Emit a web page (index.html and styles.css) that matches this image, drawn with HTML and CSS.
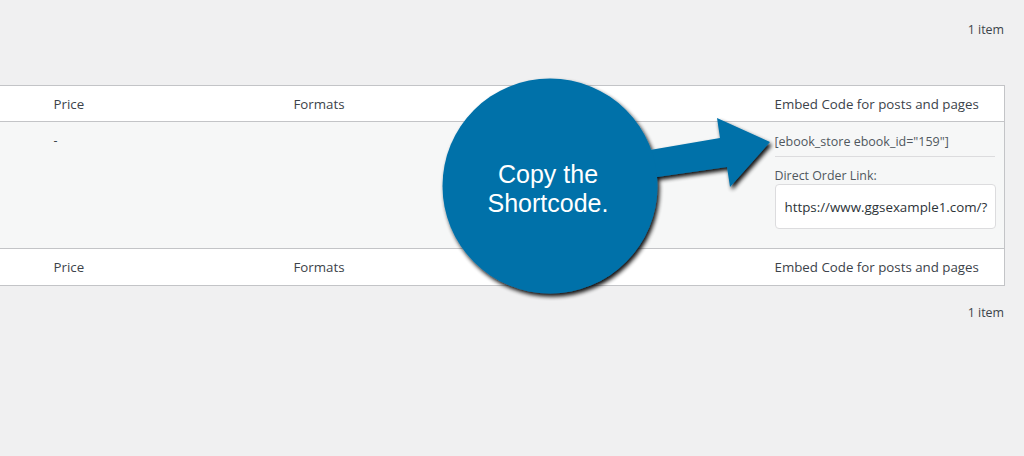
FILE: index.html
```html
<!DOCTYPE html>
<html lang="en">
<head>
<meta charset="utf-8">
<title>eBooks</title>
<link rel="stylesheet" href="styles.css">
</head>
<body>
<div class="wrap">
  <div class="tablenav top"><span class="count">1 item</span></div>
  <table class="list">
    <thead>
      <tr>
        <th class="col-cb"></th>
        <th class="col-price">Price</th>
        <th class="col-formats">Formats</th>
        <th class="col-embed">Embed Code for posts and pages</th>
      </tr>
    </thead>
    <tbody>
      <tr>
        <td class="col-cb"></td>
        <td class="col-price">-</td>
        <td class="col-formats"></td>
        <td class="col-embed">
          <div class="shortcode">[ebook_store ebook_id="159"]</div>
          <div class="order-label">Direct Order Link:</div>
          <div class="order-input">https://www.ggsexample1.com/?</div>
        </td>
      </tr>
    </tbody>
    <tfoot>
      <tr>
        <th class="col-cb"></th>
        <th class="col-price">Price</th>
        <th class="col-formats">Formats</th>
        <th class="col-embed">Embed Code for posts and pages</th>
      </tr>
    </tfoot>
  </table>
  <div class="tablenav bottom"><span class="count">1 item</span></div>
</div>

<div class="callout">
  <svg class="callout-art" width="360" height="240" viewBox="0 0 360 240" aria-hidden="true">
    <defs>
      <filter id="sh" x="-20%" y="-20%" width="140%" height="140%">
        <feGaussianBlur in="SourceAlpha" stdDeviation="2.2"/>
        <feOffset dx="2" dy="3" result="b"/>
        <feComponentTransfer><feFuncA type="linear" slope="0.95"/></feComponentTransfer>
        <feMerge><feMergeNode/><feMergeNode in="SourceGraphic"/></feMerge>
      </filter>
    </defs>
    <g filter="url(#sh)" fill="#0171a9">
      <polygon points="210,80 280,68 277,48 330,72 290,117 287,97 217,107"/>
      <circle cx="110" cy="116" r="107.5"/>
    </g>
  </svg>
  <div class="callout-text">Copy the<br>Shortcode.</div>
</div>
</body>
</html>
```
FILE: styles.css
```css
html, body {
  margin: 0;
  padding: 0;
}
body {
  background: #f0f0f1;
  color: #3c434a;
  font-family: "Open Sans", "Noto Sans", sans-serif;
  font-size: 13.3px;
  width: 1024px;
  height: 456px;
  overflow: hidden;
  position: relative;
}
.wrap {
  padding-right: 20px;
}
.tablenav {
  display: flex;
  justify-content: flex-end;
  align-items: center;
}
.tablenav.top {
  height: 58px;
  padding-bottom: 27px;
}
.tablenav.bottom {
  height: 52px;
}
.count {
  font-size: 12.4px;
  color: #3c434a;
}
.list {
  border-collapse: collapse;
  table-layout: fixed;
  width: 1005px;
  margin-left: -1px;
  background: #fff;
  border: 1px solid #c3c4c7;
}
.list th {
  font-weight: normal;
  text-align: left;
  height: 36px;
  padding: 0 10px;
  box-sizing: border-box;
}
.list tfoot th {
  height: 37px;
  border-top: 1px solid #c3c4c7;
}
.list thead th {
  border-bottom: 1px solid #c3c4c7;
}
.list tbody td {
  background: #f6f7f7;
  vertical-align: top;
  padding: 10px 10px 19px;
  font-size: 12.4px;
}
.col-cb { width: 44px; padding: 0 !important; }
.col-price { width: 240px; }
.col-formats { width: 481px; }
.col-embed { width: 240px; }
.list tbody .col-embed {
  padding: 12px 8px 19px 10px;
}
.shortcode {
  color: #50575e;
  font-size: 12.5px;
  line-height: 16px;
  padding-bottom: 6px;
  border-bottom: 1px solid #dcdcde;
  margin-right: 1px;
}
.order-label {
  color: #50575e;
  margin-top: 10px;
  line-height: 17px;
}
.order-input {
  margin-top: 0;
  height: 45px;
  box-sizing: border-box;
  border: 1px solid #dcdcde;
  border-radius: 4px;
  background: #fff;
  color: #2c3338;
  font-size: 13.35px;
  padding: 0 9px;
  display: flex;
  align-items: center;
  white-space: nowrap;
  overflow: hidden;
}
.callout {
  position: absolute;
  left: 440px;
  top: 70px;
  width: 360px;
  height: 240px;
}
.callout-art {
  position: absolute;
  left: 0;
  top: 0;
}
.callout-text {
  position: absolute;
  left: 1px;
  top: 90px;
  width: 214px;
  text-align: center;
  color: #fff;
  font-family: "Liberation Sans", Arial, sans-serif;
  font-size: 25px;
  line-height: 29px;
}
```
